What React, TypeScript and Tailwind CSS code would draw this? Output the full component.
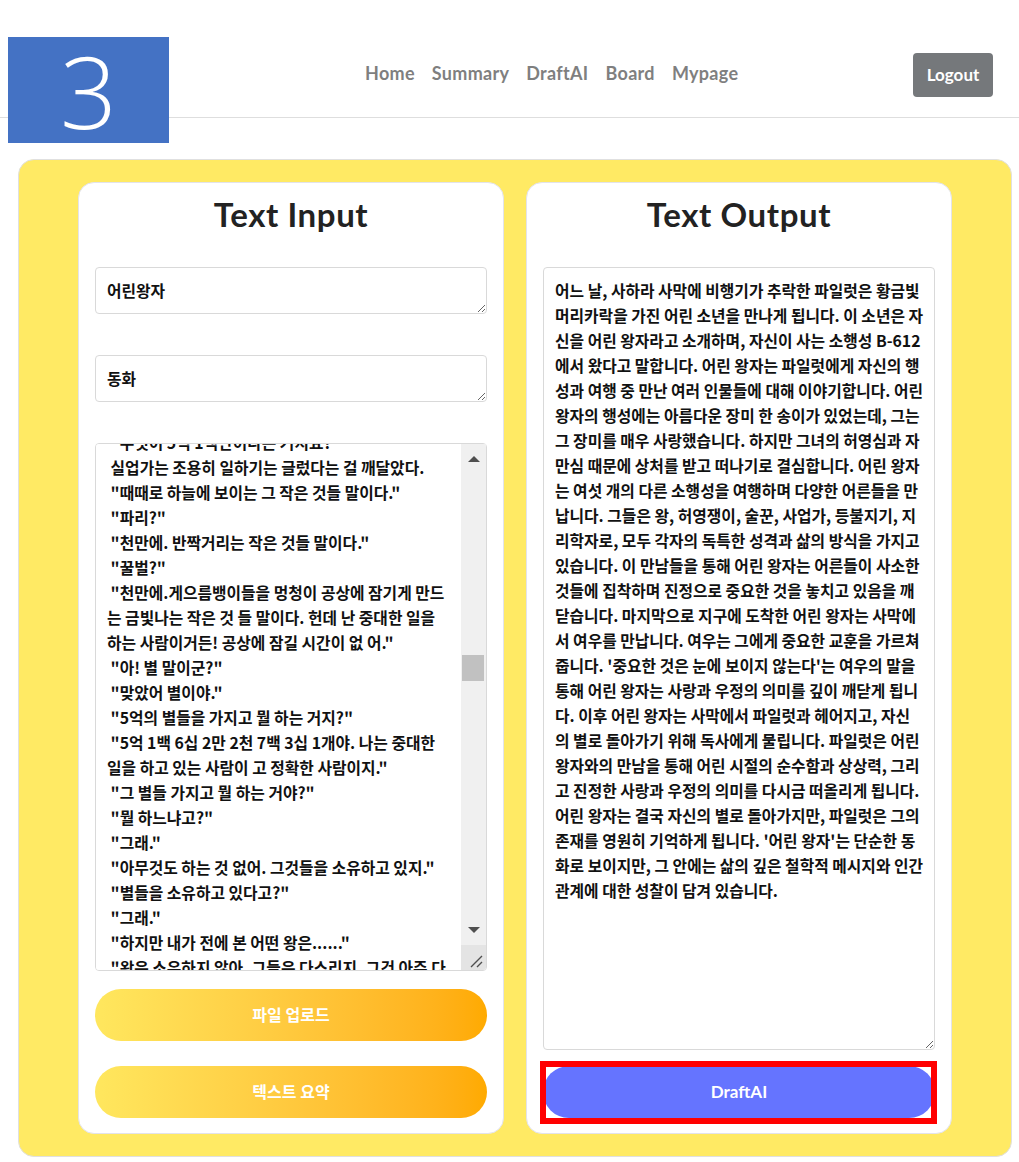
import { useLayoutEffect, useRef } from "react";

const navLinks = ["Home", "Summary", "DraftAI", "Board", "Mypage"];

const chapter = [
  ' 네 번째 별은 실업가의 별이었다.',
  ' 그 사람은 어찌나 바쁜지 고개조차 들지 않았다.',
  ' "안녕하세요. 담뱃불이 꺼졌네요."',
  ' "셋에 둘을 더하면 다섯. 다섯에 일곱을 더하면 열둘."',
  ' "열둘에 셋을 더하면 열다섯. 안녕. 열다섯에 일곱을',
  '더하면 스물둘. 스물둘에 여섯을 더하면 스물여덟."',
  ' "담배에 다시 불붙일 시간도 없다. 스물여섯에 다섯을',
  '더하면 서른하나. 휴! 그러니까 5억 1백 6십 2만 2천',
  '7백 3십 1이 되는구나."',
  ' "뭐가 5억이에요?"',
  ' "응? 너 아직 거기 있었니? 5억 1백만…… 뭐였는지',
  '모르겠다. 난 할 일이 너무 많아!"',
  ' "나는 중대한 사람이야. 허튼 소리를 할 시간이 없어!"',
  ' 어린 왕자는 한번 물은 것은 절대 포기하지 않았다.',
];

const visible = [
  ' "무엇이 5억 1백만이라는 거지요?"',
  ' 실업가는 조용히 일하기는 글렀다는 걸 깨달았다.',
  ' "때때로 하늘에 보이는 그 작은 것들 말이다."',
  ' "파리?"',
  ' "천만에. 반짝거리는 작은 것들 말이다."',
  ' "꿀벌?"',
  ' "천만에.게으름뱅이들을 멍청이 공상에 잠기게 만드',
  '는 금빛나는 작은 것 들 말이다. 헌데 난 중대한 일을',
  '하는 사람이거든! 공상에 잠길 시간이 없 어."',
  ' "아! 별 말이군?"',
  ' "맞았어 별이야."',
  ' "5억의 별들을 가지고 뭘 하는 거지?"',
  ' "5억 1백 6십 2만 2천 7백 3십 1개야. 나는 중대한',
  '일을 하고 있는 사람이 고 정확한 사람이지."',
  ' "그 별들 가지고 뭘 하는 거야?"',
  ' "뭘 하느냐고?"',
  ' "그래."',
  ' "아무것도 하는 것 없어. 그것들을 소유하고 있지."',
  ' "별들을 소유하고 있다고?"',
  ' "그래."',
  ' "하지만 내가 전에 본 어떤 왕은......"',
  ' "왕은 소유하지 않아. 그들은 다스리지. 그건 아주 다',
  '르지."',
  ' "별들을 소유한다는 게 너한테 무슨 소용이 있지?"',
  ' "부자가 되는 데 소용이 되지."',
  ' "부자가 되는 건 무슨 소용이 있는 거고?"',
  ' "누가 다른 별을 찾아내면 그걸 사는 데 소용이 되지."',
];

const fill = (n: number) => Array.from({ length: n }, (_, i) => chapter[i % chapter.length]);

const before = fill(161);
const inputText = [...before, ...visible, ...fill(230)].join("\n");

const outputText = [
  "어느 날, 사하라 사막에 비행기가 추락한 파일럿은 황금빛",
  "머리카락을 가진 어린 소년을 만나게 됩니다. 이 소년은 자",
  "신을 어린 왕자라고 소개하며, 자신이 사는 소행성 B-612",
  "에서 왔다고 말합니다. 어린 왕자는 파일럿에게 자신의 행",
  "성과 여행 중 만난 여러 인물들에 대해 이야기합니다. 어린",
  "왕자의 행성에는 아름다운 장미 한 송이가 있었는데, 그는",
  "그 장미를 매우 사랑했습니다. 하지만 그녀의 허영심과 자",
  "만심 때문에 상처를 받고 떠나기로 결심합니다. 어린 왕자",
  "는 여섯 개의 다른 소행성을 여행하며 다양한 어른들을 만",
  "납니다. 그들은 왕, 허영쟁이, 술꾼, 사업가, 등불지기, 지",
  "리학자로, 모두 각자의 독특한 성격과 삶의 방식을 가지고",
  "있습니다. 이 만남들을 통해 어린 왕자는 어른들이 사소한",
  "것들에 집착하며 진정으로 중요한 것을 놓치고 있음을 깨",
  "닫습니다. 마지막으로 지구에 도착한 어린 왕자는 사막에",
  "서 여우를 만납니다. 여우는 그에게 중요한 교훈을 가르쳐",
  "줍니다. '중요한 것은 눈에 보이지 않는다'는 여우의 말을",
  "통해 어린 왕자는 사랑과 우정의 의미를 깊이 깨닫게 됩니",
  "다. 이후 어린 왕자는 사막에서 파일럿과 헤어지고, 자신",
  "의 별로 돌아가기 위해 독사에게 물립니다. 파일럿은 어린",
  "왕자와의 만남을 통해 어린 시절의 순수함과 상상력, 그리",
  "고 진정한 사랑과 우정의 의미를 다시금 떠올리게 됩니다.",
  "어린 왕자는 결국 자신의 별로 돌아가지만, 파일럿은 그의",
  "존재를 영원히 기억하게 됩니다. '어린 왕자'는 단순한 동",
  "화로 보이지만, 그 안에는 삶의 깊은 철학적 메시지와 인간",
  "관계에 대한 성찰이 담겨 있습니다.",
].join("\n");

const fieldClass =
  "w-full rounded-[4px] border border-[#d9d9d9] bg-white pl-[11px] pr-[2px] pt-[10px] font-['Noto_Sans_CJK_KR',sans-serif] text-[15.8px] font-bold leading-[25px] text-[#111] whitespace-pre outline-none";

const yellowBtn =
  "h-[52px] w-full rounded-full bg-linear-to-r from-[#ffe75e] to-[#ffaa00] font-['Lato','Noto_Sans_CJK_KR',sans-serif] text-[16px] font-bold text-white";

// the browser hides native scrollbars in screenshots, so draw the classic one
function ScrollBar() {
  return (
    <div className="pointer-events-none absolute bottom-px right-px top-px flex w-[25px] flex-col rounded-br-[3px] bg-[#f0f0f0]">
      <div className="flex h-[30px] items-center justify-center">
        <svg width="12" height="6" viewBox="0 0 12 6">
          <path d="M0 6 L6 0 L12 6 Z" fill="#4f4f4f" />
        </svg>
      </div>
      <div className="relative flex-1">
        <div className="absolute left-[1px] right-[2px] top-[181px] h-[26px] bg-[#c1c1c1]" />
      </div>
      <div className="flex h-[30px] items-center justify-center">
        <svg width="12" height="6" viewBox="0 0 12 6">
          <path d="M0 0 L12 0 L6 6 Z" fill="#4f4f4f" />
        </svg>
      </div>
      <div className="flex h-[25px] items-end justify-end rounded-br-[3px] bg-[#e4e4e4] pb-[2px] pr-[3px]">
        <svg width="14" height="14" viewBox="0 0 14 14">
          <path d="M13 2 L2 13 M13 8 L8 13" stroke="#4f4f4f" strokeWidth="1.4" />
        </svg>
      </div>
    </div>
  );
}

export default function App() {
  const bodyRef = useRef<HTMLTextAreaElement>(null);

  useLayoutEffect(() => {
    // park the long text where the screenshot shows it
    if (bodyRef.current) bodyRef.current.scrollTop = 10 + 25 * (before.length + 1) - 11;
  }, []);

  return (
    <div className="min-h-[1162px] w-[1019px] bg-white font-['Lato',sans-serif]">
      <header className="relative flex h-[118px] items-start border-b border-[#dedede] pt-[51px]">
        <nav className="ml-[365px] flex h-[44px] items-center gap-[17px] text-[18px] font-bold tracking-[0.3px] text-[#7f7f7f]">
          {navLinks.map((l) => (
            <a key={l} href="#">
              {l}
            </a>
          ))}
        </nav>
        <button className="ml-auto mr-[26px] mt-[2px] h-[44px] w-[80px] rounded-[4px] bg-[#75787b] text-[17px] font-bold text-white">
          Logout
        </button>
        <div className="absolute left-[8px] top-[37px] flex h-[106px] w-[161px] items-center justify-center bg-[#4472c4] font-['Open_Sans',sans-serif] text-[100px] font-light leading-none text-white">
          3
        </div>
      </header>

      <main className="ml-[18px] mt-[41px] flex w-[994px] justify-center gap-[22px] rounded-[16px] border border-[#e0e0e0] bg-[#ffea64] py-[22px]">
        <section className="flex w-[426px] flex-col rounded-[16px] border border-[#e3e3ea] bg-white px-[16px] pb-[15px] pt-[13px]">
          <h2 className="mb-[35px] text-center text-[33px] font-bold leading-[36px] tracking-[0.6px] text-[#222]">
            Text Input
          </h2>
          <textarea className={`${fieldClass} h-[47px] overflow-hidden`} defaultValue="어린왕자" />
          <textarea className={`${fieldClass} mt-[41px] h-[47px] overflow-hidden`} defaultValue="동화" />
          <div className="relative mt-[41px] h-[528px]">
            <textarea
              ref={bodyRef}
              className={`${fieldClass} h-full overflow-x-hidden overflow-y-scroll pr-[27px]`}
              defaultValue={inputText}
            />
            <ScrollBar />
          </div>
          <button className={`${yellowBtn} mt-[18px]`}>파일 업로드</button>
          <button className={`${yellowBtn} mt-[25px]`}>텍스트 요약</button>
        </section>

        <section className="flex w-[426px] flex-col rounded-[16px] border border-[#e3e3ea] bg-white px-[16px] pb-[15px] pt-[13px]">
          <h2 className="mb-[35px] text-center text-[33px] font-bold leading-[36px] tracking-[0.6px] text-[#222]">
            Text Output
          </h2>
          <textarea
            className={`${fieldClass} min-h-0 flex-1 overflow-hidden leading-[24.8px]`}
            defaultValue={outputText}
          />
          <div className="relative mt-[16px]">
            <button className="h-[52px] w-full rounded-full bg-[#6574ff] text-[17px] font-bold text-white">
              DraftAI
            </button>
            <div className="pointer-events-none absolute -bottom-[6px] -left-[3px] -right-[2px] -top-[5px] border-[6px] border-[#ff0000]" />
          </div>
        </section>
      </main>
    </div>
  );
}
